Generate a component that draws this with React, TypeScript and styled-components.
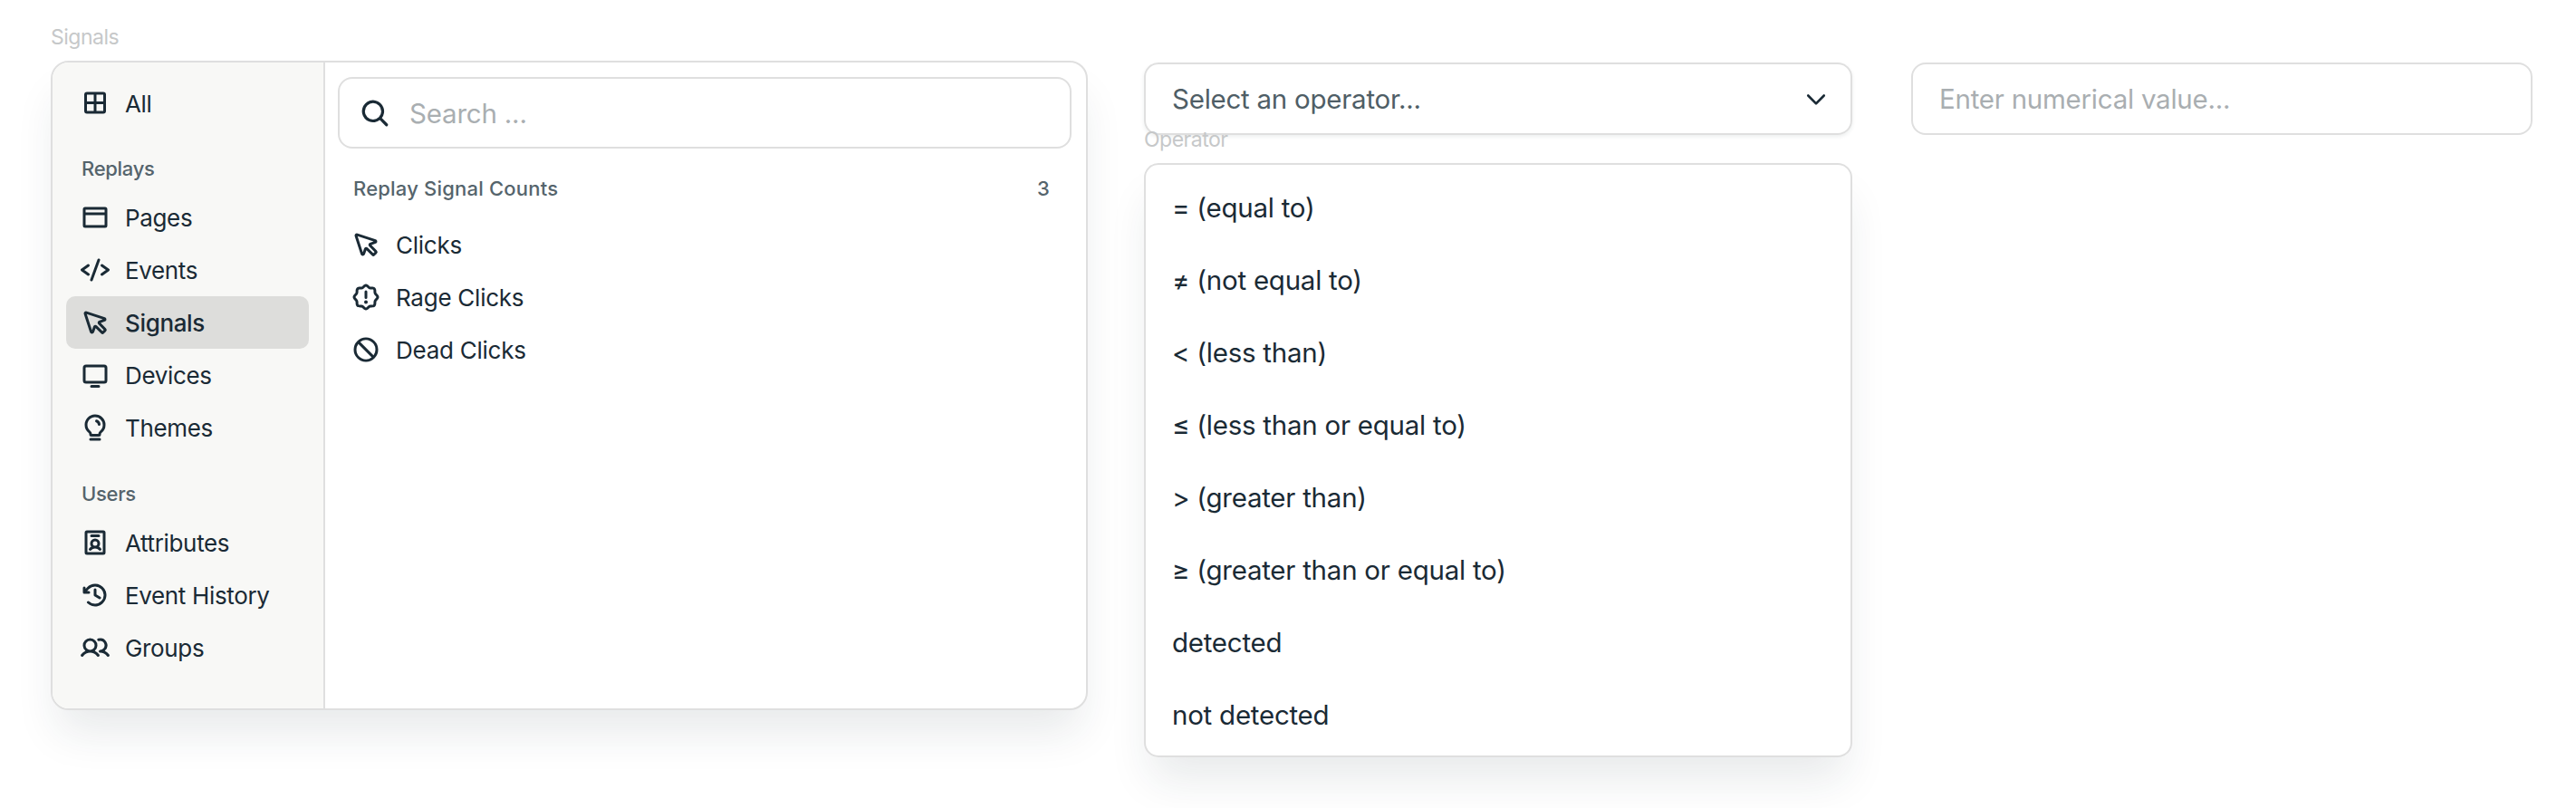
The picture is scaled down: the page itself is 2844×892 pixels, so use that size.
import React from 'react';
import styled, { createGlobalStyle } from 'styled-components';
import {
  PiBrowserBold, PiCursorBold, PiMonitorBold, PiLightbulbBold,
  PiIdentificationBadgeBold, PiClockCounterClockwiseBold, PiUsersBold,
  PiSealWarningBold, PiProhibitBold, PiMagnifyingGlassBold, PiCaretDownBold,
} from 'react-icons/pi';

const Global = createGlobalStyle`
  html, body { margin: 0; background: #fff; }
  body { font-family: Inter, "Liberation Sans", sans-serif; color: #1a2a35; }
`;
const Page = styled.div`display: flex; align-items: flex-start; padding: 27px 48px 0 56px; width: 2844px; height: 892px; box-sizing: border-box; overflow: hidden;`;
const PanelColumn = styled.div`width: 1145px; margin-right: 62px; flex: none;`;
const FieldLabel = styled.div`font-size: 23px; line-height: 28px; letter-spacing: -0.5px; color: #c6c8c9;`;
const Panel = styled.div`
  display: flex; margin-top: 12px; height: 717px; box-sizing: border-box;
  border: 2px solid #dfdfdf; border-radius: 20px; overflow: hidden; background: #fff;
  box-shadow: 0 32px 48px -8px rgba(30, 45, 55, 0.1);
`;
const Sidebar = styled.nav`width: 301px; flex: none; box-sizing: border-box; padding: 16px 16px 15px 15px; background: #f8f8f6; border-right: 2px solid #dfdfdf;`;
const NavRow = styled.div<{ $active?: boolean }>`
  display: flex; align-items: center; gap: 17px; height: 58px; padding: 0 15px 0 16px; border-radius: 10px;
  font-size: 26px; letter-spacing: -0.35px; font-weight: ${p => p.$active ? 500 : 400};
  background: ${p => p.$active ? '#dddddb' : 'transparent'};
  svg { width: 32px; height: 32px; flex: none; }
`;
const SectionTitle = styled.div<{ $gap: number }>`margin-top: ${p => p.$gap}px; padding-left: 17px; height: 49px; line-height: 49px; font-size: 22px; letter-spacing: -0.3px; font-weight: 500; color: #55646c;`;
const Results = styled.div`flex: 1; padding: 16px 16px 15px 14px;`;
const SearchBox = styled.div`
  display: flex; align-items: center; gap: 21px; height: 79px; box-sizing: border-box; padding: 0 22px;
  border: 2px solid #dfdfdf; border-radius: 16px; font-size: 29.5px; letter-spacing: -0.2px; color: #a9aeb1;
  svg { width: 34px; height: 34px; color: #1a2a35; flex: none; }
`;
const ResultsHeader = styled.div`display: flex; justify-content: space-between; padding: 21px 24px 0 17px; height: 46px; line-height: 46px; font-size: 22px; letter-spacing: 0.2px; font-weight: 500; color: #55646c;`;
const ResultRow = styled.div`
  display: flex; align-items: center; gap: 17px; height: 58px; padding-left: 15px; font-size: 26px; letter-spacing: -0.25px;
  svg { width: 32px; height: 32px; flex: none; }
`;
const ResultList = styled.div`margin-top: 10px;`;
const OperatorColumn = styled.div`width: 782px; margin-right: 65px; padding-top: 42px; flex: none;`;
const SelectBox = styled.div`
  display: flex; align-items: center; justify-content: space-between; height: 80px; box-sizing: border-box; padding: 0 24px 0 29px;
  border: 2px solid #dfdfdf; border-radius: 16px; font-size: 29.5px; letter-spacing: -0.25px; color: #4f5e66;
  box-shadow: 0 2px 4px rgba(30,45,55,.08);
  svg { width: 28px; height: 28px; color: #1a2a35; }
`;
const OperatorLabel = styled(FieldLabel)`margin-top: -9px;`;
const OperatorList = styled.ul`
  list-style: none; margin: 12px 0 0; padding: 8px 0 14px; height: 656px; box-sizing: border-box;
  border: 2px solid #dfdfdf; border-radius: 16px; background: #fff;
  box-shadow: 0 32px 48px -8px rgba(30, 45, 55, 0.1);
`;
const OperatorItem = styled.li`height: 80px; line-height: 79px; padding-left: 29px; font-size: 29.5px; letter-spacing: -0.25px;`;
const ValueInput = styled.div`
  width: 686px; margin-top: 42px; height: 80px; line-height: 76px; box-sizing: border-box; padding: 0 29px;
  border: 2px solid #dfdfdf; border-radius: 16px; font-size: 29.5px; letter-spacing: -0.25px; color: #a9aeb1;
`;

const CodeIcon = () => (
  <svg viewBox="0 0 32 32" fill="none" stroke="currentColor" strokeWidth="3" strokeLinecap="round" strokeLinejoin="round">
    <path d="M8.5 11 1.5 16l7 5M23.5 11l7 5-7 5M20 5l-8 22" />
  </svg>
);

const GridIcon = () => (
  <svg viewBox="0 0 32 32" fill="none" stroke="currentColor" strokeWidth="3" strokeLinejoin="round">
    <rect x="5.5" y="5" width="21" height="21" rx="1.5" />
    <path d="M16 5v21M5.5 15.5h21" />
  </svg>
);

const operators = ['= (equal to)', '≠ (not equal to)', '< (less than)', '≤ (less than or equal to)', '> (greater than)', '≥ (greater than or equal to)', 'detected', 'not detected'];

export default function App() {
  return (
    <Page>
      <Global />
      <PanelColumn>
        <FieldLabel>Signals</FieldLabel>
        <Panel>
          <Sidebar>
            <NavRow><GridIcon />All</NavRow>
            <SectionTitle $gap={19}>Replays</SectionTitle>
            <NavRow><PiBrowserBold />Pages</NavRow>
            <NavRow><CodeIcon />Events</NavRow>
            <NavRow $active><PiCursorBold />Signals</NavRow>
            <NavRow><PiMonitorBold />Devices</NavRow>
            <NavRow><PiLightbulbBold />Themes</NavRow>
            <SectionTitle $gap={20}>Users</SectionTitle>
            <NavRow><PiIdentificationBadgeBold />Attributes</NavRow>
            <NavRow><PiClockCounterClockwiseBold />Event History</NavRow>
            <NavRow><PiUsersBold />Groups</NavRow>
          </Sidebar>
          <Results>
            <SearchBox><PiMagnifyingGlassBold />Search ...</SearchBox>
            <ResultsHeader><span>Replay Signal Counts</span><span>3</span></ResultsHeader>
            <ResultList>
              <ResultRow><PiCursorBold />Clicks</ResultRow>
              <ResultRow><PiSealWarningBold />Rage Clicks</ResultRow>
              <ResultRow><PiProhibitBold />Dead Clicks</ResultRow>
            </ResultList>
          </Results>
        </Panel>
      </PanelColumn>
      <OperatorColumn>
        <SelectBox>Select an operator...<PiCaretDownBold /></SelectBox>
        <OperatorLabel>Operator</OperatorLabel>
        <OperatorList>
          {operators.map(o => <OperatorItem key={o}>{o}</OperatorItem>)}
        </OperatorList>
      </OperatorColumn>
      <ValueInput>Enter numerical value...</ValueInput>
    </Page>
  );
}
